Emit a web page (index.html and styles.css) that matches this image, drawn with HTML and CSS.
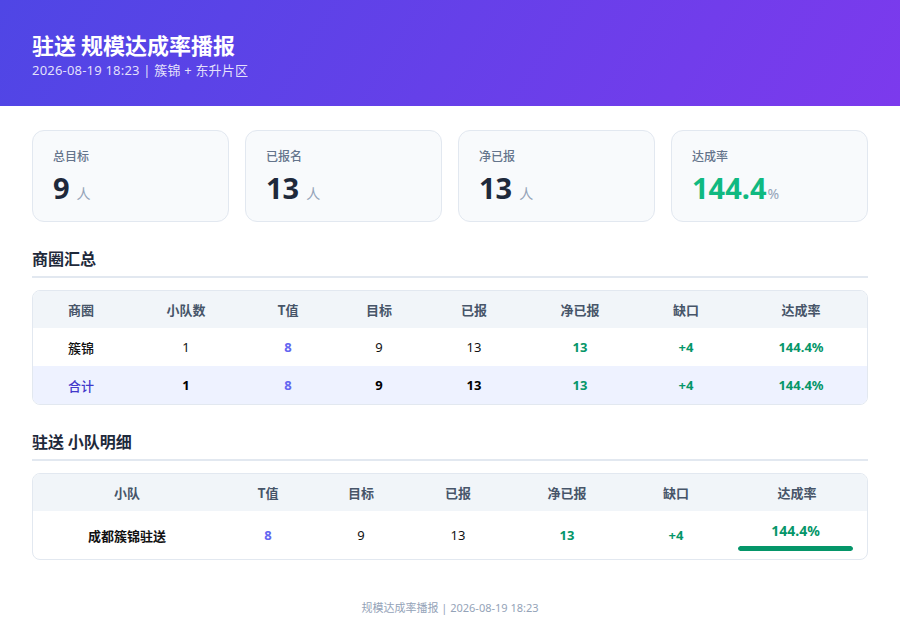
FILE: index.html
```html
<!DOCTYPE html>
<html lang="zh-CN">
<head>
<meta charset="utf-8">
<title>驻送 规模达成率播报</title>
<link rel="stylesheet" href="styles.css">
</head>
<body>
<header class="hero">
  <h1 class="hero-title">驻送 规模达成率播报</h1>
  <div class="hero-sub">2026-08-19 18:23 | 簇锦 + 东升片区</div>
</header>
<main class="content">
  <section class="cards">
    <div class="card"><div class="card-label">总目标</div><div class="card-value">9<span class="unit">人</span></div></div>
    <div class="card"><div class="card-label">已报名</div><div class="card-value">13<span class="unit">人</span></div></div>
    <div class="card"><div class="card-label">净已报</div><div class="card-value">13<span class="unit">人</span></div></div>
    <div class="card"><div class="card-label">达成率</div><div class="card-value green">144.4<span class="unit pct">%</span></div></div>
  </section>

  <h2 class="section-title">商圈汇总</h2>
  <div class="table-wrap">
    <table class="data">
      <colgroup>
        <col class="c96"><col class="c114"><col class="c90"><col class="c92"><col class="c98"><col class="c114"><col class="c98"><col>
      </colgroup>
      <thead>
        <tr><th>商圈</th><th>小队数</th><th>T值</th><th>目标</th><th>已报</th><th>净已报</th><th>缺口</th><th>达成率</th></tr>
      </thead>
      <tbody>
        <tr><td class="name">簇锦</td><td>1</td><td class="tval">8</td><td>9</td><td>13</td><td class="pos">13</td><td class="pos">+4</td><td class="pos">144.4%</td></tr>
        <tr class="total"><td class="total-name">合计</td><td class="b">1</td><td class="tval">8</td><td class="b">9</td><td class="b">13</td><td class="pos">13</td><td class="pos">+4</td><td class="pos">144.4%</td></tr>
      </tbody>
    </table>
  </div>

  <h2 class="section-title">驻送 小队明细</h2>
  <div class="table-wrap">
    <table class="data">
      <colgroup>
        <col class="c188"><col class="c94"><col class="c92"><col class="c102"><col class="c116"><col class="c102"><col>
      </colgroup>
      <thead>
        <tr><th>小队</th><th>T值</th><th>目标</th><th>已报</th><th>净已报</th><th>缺口</th><th>达成率</th></tr>
      </thead>
      <tbody>
        <tr class="detail">
          <td class="team">成都簇锦驻送</td><td class="tval">8</td><td>9</td><td>13</td><td class="pos">13</td><td class="pos">+4</td>
          <td class="rate-cell"><div class="rate-text">144.4%</div><div class="bar"><div class="bar-fill" style="width:100%"></div></div></td>
        </tr>
      </tbody>
    </table>
  </div>

  <footer class="foot">规模达成率播报 | 2026-08-19 18:23</footer>
</main>
</body>
</html>
```
FILE: styles.css
```css
* { box-sizing: border-box; }
html, body { margin: 0; padding: 0; }
body {
  background: #ffffff;
  font-family: "Noto Sans", "Noto Sans CJK SC", sans-serif;
  color: #1e293b;
  width: 900px;
}
.hero {
  background: linear-gradient(120deg, #4f46e5 0%, #7c3aed 100%);
  padding: 29px 32px 27px;
  color: #fff;
}
.hero-title {
  margin: 0;
  font-size: 22px;
  line-height: 30px;
  font-weight: 700;
  font-family: "Noto Sans CJK SC", sans-serif;
}
.hero-sub {
  margin-top: 2px;
  font-size: 13px;
  line-height: 18px;
  letter-spacing: 0.2px;
  color: rgba(255,255,255,0.85);
}
.content { padding: 24px 32px 0; }
.cards {
  display: grid;
  grid-template-columns: repeat(4, 1fr);
  gap: 16px;
}
.card {
  background: #f8fafc;
  border: 1px solid #e2e8f0;
  border-radius: 12px;
  padding: 17px 20px 13px;
  height: 92px;
}
.card-label {
  font-size: 12px;
  line-height: 16px;
  color: #64748b;
  font-weight: 500;
  font-family: "Noto Sans CJK SC", sans-serif;
}
.card-value {
  margin-top: 6px;
  font-size: 29px;
  line-height: 36px;
  font-weight: 700;
  color: #1e293b;
}
.card-value.green { color: #10b981; }
.unit {
  font-size: 14px;
  font-weight: 400;
  color: #94a3b8;
  margin-left: 7px;
  font-family: "Noto Sans CJK SC", sans-serif;
}
.unit.pct { margin-left: 1px; font-family: "Noto Sans", sans-serif; }
.section-title {
  margin: 24px 0 12px;
  font-size: 16px;
  line-height: 24px;
  font-weight: 700;
  padding-bottom: 6px;
  border-bottom: 2px solid #e2e8f0;
  font-family: "Noto Sans CJK SC", sans-serif;
  color: #1e293b;
}
.table-wrap {
  border: 1px solid #e2e8f0;
  border-radius: 8px;
  overflow: hidden;
}
.data {
  width: 100%;
  border-collapse: collapse;
  table-layout: fixed;
  font-size: 13px;
}
.c90 { width: 90px; }
.c92 { width: 92px; }
.c94 { width: 94px; }
.c96 { width: 96px; }
.c98 { width: 98px; }
.c102 { width: 102px; }
.c114 { width: 114px; }
.c116 { width: 116px; }
.c188 { width: 188px; }
.data th {
  background: #f1f5f9;
  color: #475569;
  font-weight: 600;
  height: 37px;
  padding: 0 6px;
  text-align: center;
  font-family: "Noto Sans CJK SC", sans-serif;
}
.data td {
  height: 38px;
  padding: 0 6px;
  text-align: center;
  color: #111;
}
.data td.name { font-family: "Noto Sans CJK SC", sans-serif; font-weight: 500; }
.data td.team { font-family: "Noto Sans CJK SC", sans-serif; font-weight: 600; }
.tval { color: #6366f1 !important; font-weight: 700; }
.pos { color: #059669 !important; font-weight: 700; }
.b { font-weight: 700; color: #000 !important; }
.total td { background: #eef2ff; }
.total-name { color: #4338ca !important; font-family: "Noto Sans CJK SC", sans-serif; font-weight: 500; }
.detail td { height: 48px; }
.rate-cell { padding: 0 14px 0 11px !important; }
.rate-text {
  font-size: 14px;
  font-weight: 700;
  color: #059669;
  line-height: 18px;
  margin-top: 2px;
}
.bar {
  margin-top: 6px;
  height: 5px;
  background: #e2e8f0;
  border-radius: 3px;
  overflow: hidden;
}
.bar-fill { height: 100%; background: #059669; border-radius: 3px; }
.foot {
  margin-top: 40px;
  text-align: center;
  font-size: 11px;
  color: #94a3b8;
  line-height: 16px;
}
```
